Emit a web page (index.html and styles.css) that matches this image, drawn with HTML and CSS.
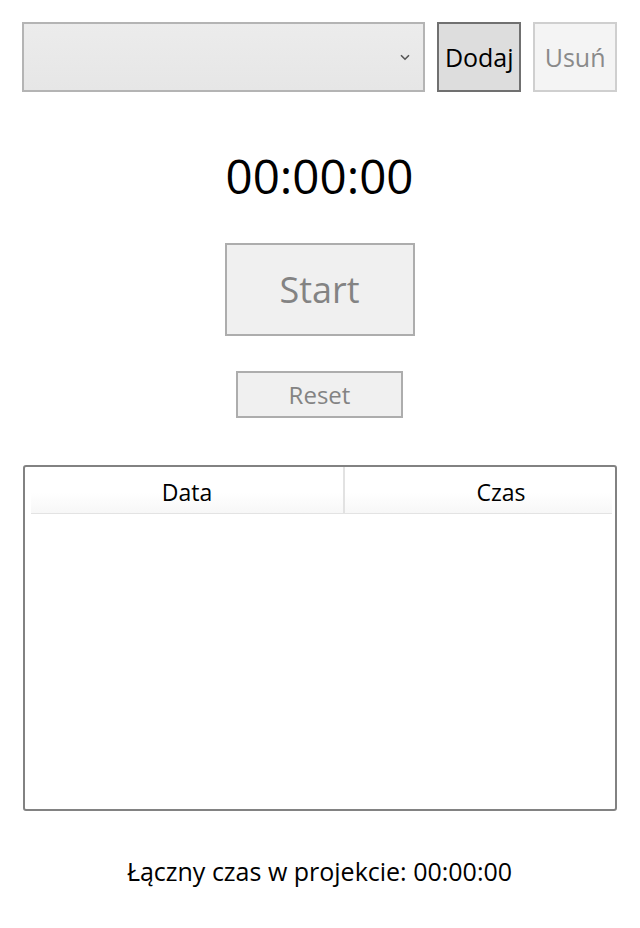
FILE: index.html
```html
<!DOCTYPE html>
<html lang="pl">
<head>
<meta charset="utf-8">
<title>Timer</title>
<link rel="stylesheet" href="styles.css">
</head>
<body>
<div class="app">
  <div class="toolbar">
    <div class="combo">
      <svg class="chevron" width="10" height="7" viewBox="0 0 10 7"><path d="M1 1.2 L5 5.2 L9 1.2" fill="none" stroke="#555" stroke-width="1.6"/></svg>
    </div>
    <button class="btn btn-dodaj">Dodaj</button>
    <button class="btn btn-usun">Usuń</button>
  </div>
  <div class="timer">00:00:00</div>
  <div class="actions">
    <button class="btn btn-start">Start</button>
    <button class="btn btn-reset">Reset</button>
  </div>
  <div class="table">
    <div class="thead">
      <div class="th th-data">Data</div>
      <div class="th th-czas">Czas</div>
    </div>
  </div>
  <div class="total">Łączny czas w projekcie: 00:00:00</div>
</div>
</body>
</html>
```
FILE: styles.css
```css
html, body {
  margin: 0;
  padding: 0;
  background: #ffffff;
}
body {
  font-family: "Open Sans", "Noto Sans", "DejaVu Sans", sans-serif;
  color: #000;
}
.app {
  width: 640px;
  padding: 22px 23px 0 22px;
  box-sizing: border-box;
  display: flex;
  flex-direction: column;
}
.toolbar {
  display: flex;
  gap: 12px;
  height: 70px;
}
.combo {
  width: 404px;
  box-sizing: border-box;
  border: 2px solid #b4b4b4;
  background: linear-gradient(#ececec, #e6e6e6);
  display: flex;
  align-items: center;
  justify-content: flex-end;
  padding-right: 13px;
}
.chevron { display: block; }
.btn {
  font-family: inherit;
  box-sizing: border-box;
  margin: 0;
  padding: 0;
  cursor: default;
}
.btn-dodaj {
  width: 84px;
  border: 2px solid #707070;
  background: #dddddd;
  color: #000;
  font-size: 25px;
}
.btn-usun {
  width: 84px;
  border: 2px solid #cfcfcf;
  background: #f4f4f4;
  color: #8a8a8a;
  font-size: 25px;
}
.timer {
  text-align: center;
  font-size: 47.5px;
  line-height: 64px;
  margin-top: 52px;
  color: #000;
}
.actions {
  display: flex;
  flex-direction: column;
  align-items: center;
  margin-top: 35px;
  gap: 35px;
}
.btn-start {
  width: 190px;
  height: 93px;
  border: 2px solid #adadad;
  background: #f0f0f0;
  color: #838383;
  font-size: 36px;
}
.btn-reset {
  width: 167px;
  height: 47px;
  border: 2px solid #adadad;
  background: #f0f0f0;
  color: #838383;
  font-size: 24px;
}
.table {
  margin-top: 47px;
  margin-left: 1px;
  width: 594px;
  height: 346px;
  box-sizing: border-box;
  border: 2px solid #828282;
  border-radius: 3px;
  padding: 0 3px 0 6px;
}
.thead {
  display: flex;
  height: 46px;
  overflow: hidden;
  border-bottom: 1px solid #e3e3e3;
  background: linear-gradient(#ffffff 55%, #f7f7f7);
}
.th {
  display: flex;
  align-items: center;
  justify-content: center;
  font-size: 23px;
  padding-top: 4px;
  box-sizing: border-box;
  flex: none;
}
.th-data {
  width: 314px;
  border-right: 2px solid #e2e2e2;
}
.th-czas {
  width: 312px;
}
.total {
  text-align: center;
  font-size: 25px;
  line-height: 32px;
  margin-top: 44px;
}
```
